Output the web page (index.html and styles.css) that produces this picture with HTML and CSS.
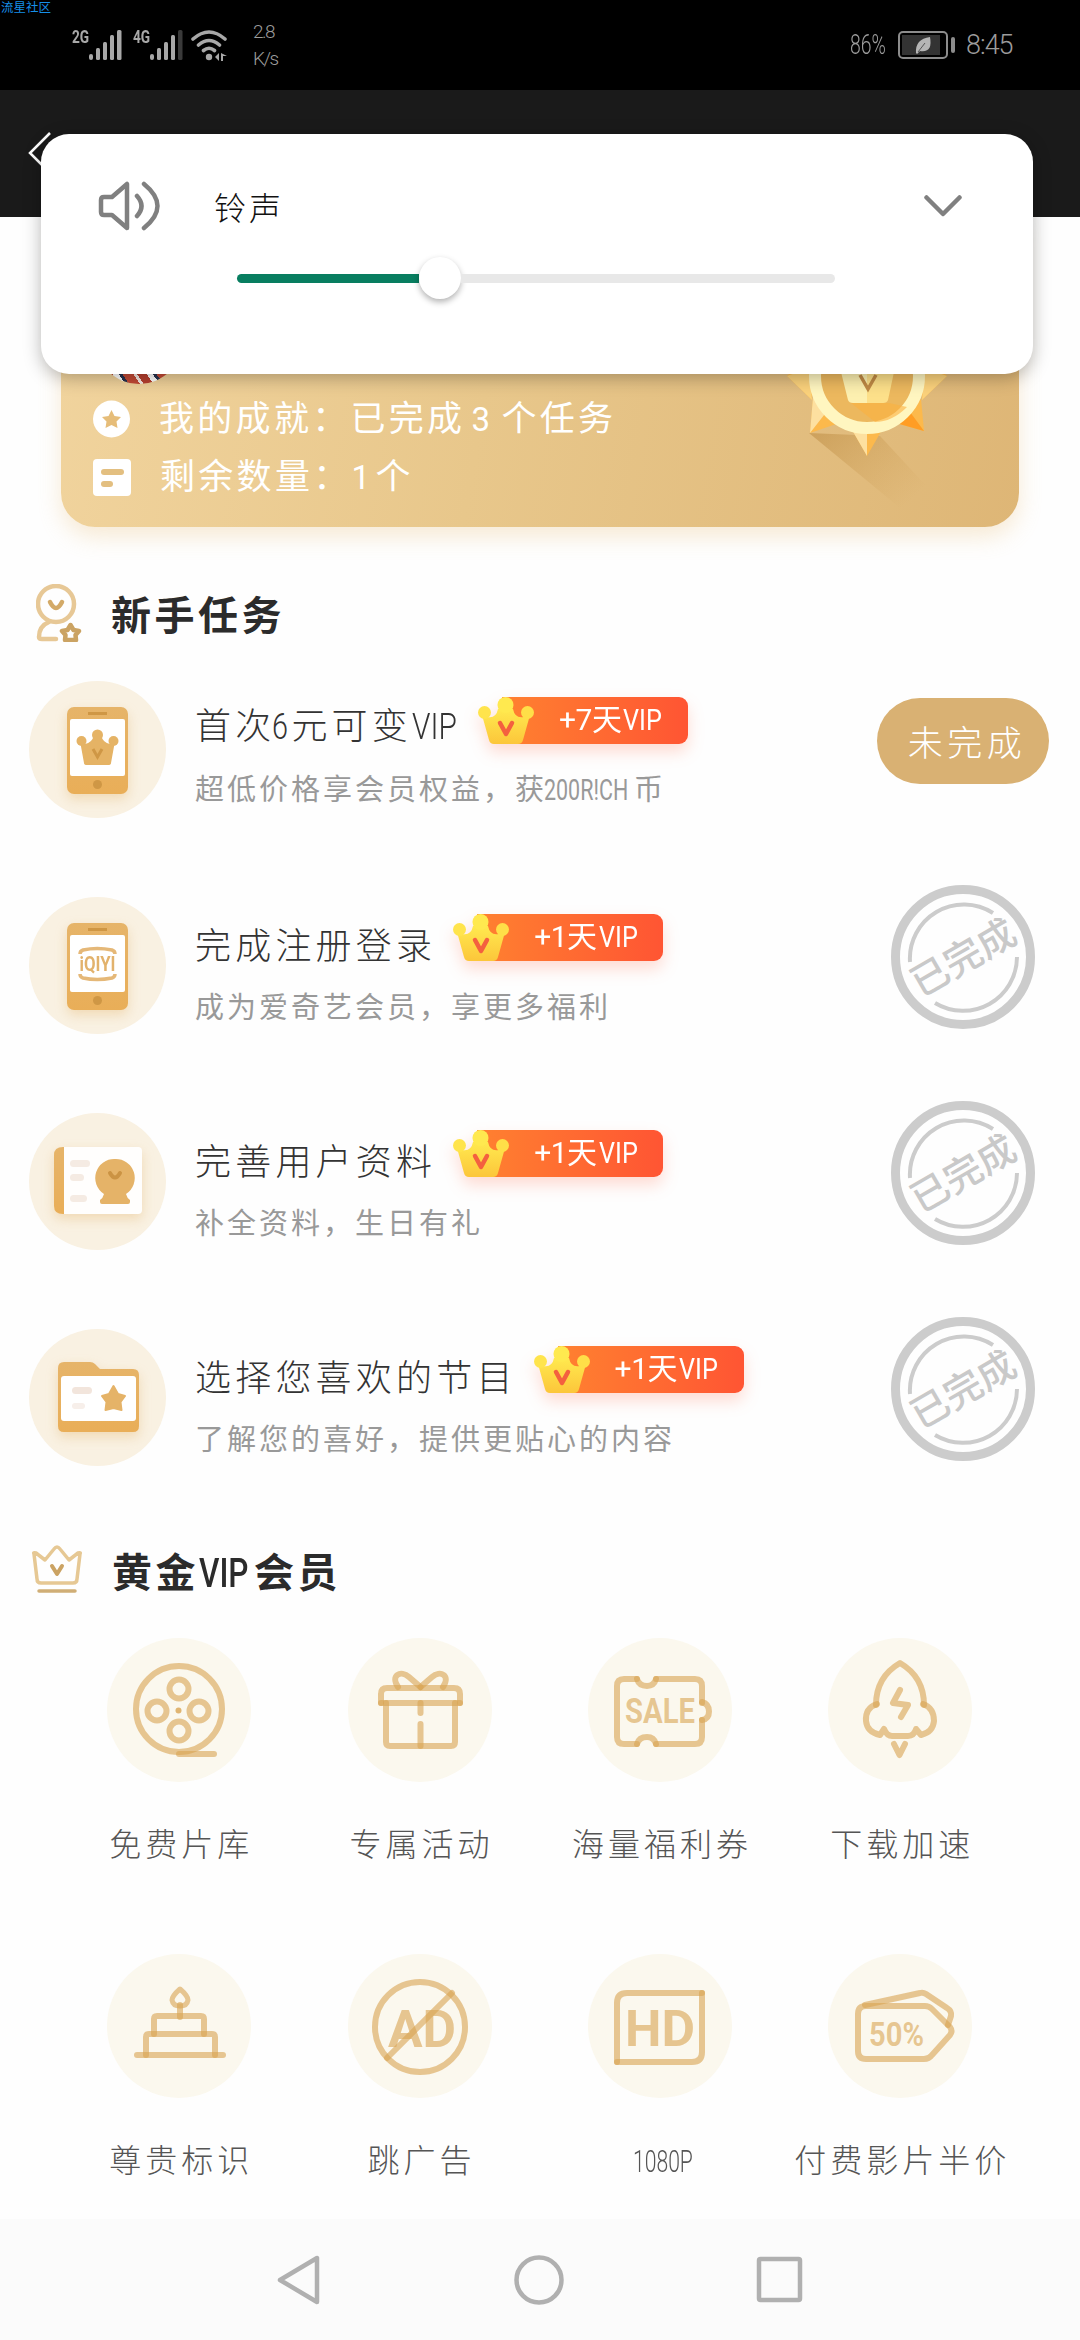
FILE: index.html
```html
<!DOCTYPE html>
<html lang="zh-CN">
<head>
<meta charset="utf-8">
<title>会员任务</title>
<link rel="stylesheet" href="styles.css">
</head>
<body>
<svg class="defs" width="0" height="0" aria-hidden="true">
  <defs>
    <linearGradient id="gold" x1="0" y1="0" x2="0" y2="1"><stop offset="0" stop-color="#ffe94f"/><stop offset="1" stop-color="#fcc63a"/></linearGradient>
    <linearGradient id="amber" x1="0" y1="0" x2="0" y2="1"><stop offset="0" stop-color="#e6b469"/><stop offset="1" stop-color="#e9ae58"/></linearGradient>
    <linearGradient id="cast" gradientUnits="userSpaceOnUse" x1="830" y1="420" x2="905" y2="505"><stop offset="0" stop-color="#b9873c" stop-opacity=".5"/><stop offset="1" stop-color="#c9974c" stop-opacity="0"/></linearGradient>
    <linearGradient id="shine" x1="0" y1="0" x2="1" y2="0"><stop offset=".5" stop-color="#fdf0b0"/><stop offset=".5" stop-color="#fde08a"/></linearGradient>
    <symbol id="crown" viewBox="0 0 56 47">
      <path d="M4 18L9 20Q18 22 20 12H35Q37 22 46 20L52 18L45 43Q44 47 40 47H16Q12 47 11 43Z" fill="url(#gold)"/>
      <circle cx="6.500" cy="15.500" r="6.500" fill="#ffe44c"/><circle cx="27.500" cy="8" r="8" fill="#ffe94f"/><circle cx="49.500" cy="15.500" r="6.500" fill="#ffdf48"/>
      <path d="M22 26L28 37L34 26" fill="none" stroke="#f4603f" stroke-width="4.500" stroke-linecap="round" stroke-linejoin="round"/>
    </symbol>
    <symbol id="stamp" viewBox="0 0 144 144">
      <g fill="none" stroke="#ccc"><circle cx="72" cy="72" r="67.500" stroke-width="9"/>
      <path d="M19 77A54 54 0 0 1 102 28M126 72A54 54 0 0 1 44 118" stroke-width="4"/></g>
      <text x="72" y="86" class="stamp-text" text-anchor="middle" transform="rotate(-30 72 72)">已完成</text>
    </symbol>
  </defs>
</svg>

<div class="screen">
  <span class="watermark">流星社区</span>
  <header class="status">
    <div class="status-left">
      <span class="net"><b>2G</b></span>
      <svg class="bars" width="33" height="30" viewBox="0 0 33 30" fill="#a8a8a8"><rect y="24" width="4" height="6" rx="2"/><rect x="7" y="18" width="4" height="12" rx="1.500"/><rect x="14" y="12" width="4" height="18" rx="1.500"/><rect x="21" y="5" width="4" height="25" rx="1.500"/><rect x="28" width="4.500" height="30" rx="1.500"/></svg>
      <span class="net second"><b>4G</b></span>
      <svg class="bars" width="33" height="30" viewBox="0 0 33 30" fill="#a8a8a8"><rect y="24" width="4" height="6" rx="2"/><rect x="7" y="18" width="4" height="12" rx="1.500"/><rect x="14" y="12" width="4" height="18" rx="1.500"/><rect x="21" y="5" width="4" height="25" rx="1.500"/><rect x="28" width="4.500" height="30" rx="1.500" fill="#3a3a3a"/></svg>
      <svg class="wifi" width="38" height="31" viewBox="0 0 38 31"><g fill="none" stroke="#a8a8a8" stroke-width="3.600" stroke-linecap="round"><path d="M2 9Q18-5 34 9M7.500 15Q18 6 28.500 15M12.500 20.500Q18 16 23.500 20.500"/></g><circle cx="18" cy="27" r="3.200" fill="#a8a8a8"/><path d="M24 27L28 23V31ZM30 23V31H32V26L36 26Z" fill="#a8a8a8"/></svg>
      <div class="speed"><span>2.8</span><span>K/s</span></div>
    </div>
    <div class="status-right">
      <span class="hand pct"><b>86%</b></span>
      <svg width="58" height="28" viewBox="0 0 58 28"><rect x="1" y="1" width="48" height="26" rx="4" fill="none" stroke="#8c8c8c" stroke-width="2"/><rect x="4" y="4" width="38" height="20" fill="#333"/><path d="M18 22Q17 8 32 6Q35 22 22 20L19 23Z" fill="#b5b5b5"/><path d="M20 21L27 12" stroke="#555" stroke-width="1"/><rect x="53" y="6" width="4" height="16" rx="2" fill="#8c8c8c"/></svg>
      <span class="hand clock">8:45</span>
    </div>
  </header>

  <div class="topbar">
    <svg width="24" height="42" viewBox="0 0 24 42" fill="none" stroke="#fff" stroke-width="2.500"><path d="M22 1L2 21L22 41"/></svg>
  </div>

  <section class="volume">
    <div class="volume-head">
      <svg width="62" height="50" viewBox="0 0 62 50" fill="none" stroke="#808080" stroke-width="4.500" stroke-linecap="round" stroke-linejoin="round"><path d="M3 19Q3 16 6 16H14L29 3V47L14 34H6Q3 34 3 31ZM39 15Q48 25 39 35M46 3Q73 25 46 47"/></svg>
      <span class="volume-name">铃声</span>
      <svg class="chev" width="38" height="23" viewBox="0 0 38 23" fill="none" stroke="#808080" stroke-width="4.500" stroke-linecap="round" stroke-linejoin="round"><path d="M2.500 2.500L19 19L35.500 2.500"/></svg>
    </div>
    <div class="slider"><div class="slider-fill"></div><div class="thumb"></div><div class="slider-rest"></div></div>
  </section>

  <section class="card">
    <svg class="medal" width="200" height="220" viewBox="767 300 200 220">
      <path d="M809 433L880 436L930 490L905 512Z" fill="url(#cast)"/>
      <path d="M867 456L848 423L886 423ZM810 433L813 399L845 421ZM924 431L921 399L889 421ZM787 376L813 350L812 400ZM947 376L921 350L922 400Z" fill="#fcb94c"/>
      <path d="M867 456V423H848ZM810 433L813 397L828 410Z" fill="#fde0a0"/><path d="M787 376L809 368L812 400ZM947 376L925 368L922 400Z" fill="#fbd27c"/>
      <path d="M924 431L889 421L910 412Z" fill="#ff9d24"/>
      <circle cx="867" cy="376" r="52" fill="#ecb85e" stroke="#fff6c0" stroke-width="12"/>
      <path d="M851 403H889L907 407Q892 422 875 422Z" fill="#fbb040" opacity=".6"/>
      <path d="M841 372H894L888 400Q887 403 883 403H853Q849 403 848 400Z" fill="url(#shine)"/>
      <path d="M860 375L868 389L876 375" fill="none" stroke="#c08a45" stroke-width="3.500"/>
    </svg>
    <div class="avatar"></div>
    <div class="stat">
      <svg width="37" height="38" viewBox="0 0 37 38"><circle cx="18.500" cy="19" r="18.500" fill="#fff"/><path d="M18.500 10L21.500 16L28 17L23.500 21.500L24.500 28L18.500 25L12.500 28L13.500 21.500L9 17L15.500 16Z" fill="#e6bd79"/></svg>
      <p>我的成就：已完成<i class="three">3</i>个任务</p>
    </div>
    <div class="stat">
      <svg width="38" height="37" viewBox="0 0 38 37"><rect width="38" height="37" rx="4" fill="#fff"/><rect x="8" y="10" width="23" height="6" rx="3" fill="#e3bf80"/><rect x="8" y="22" width="12" height="6" rx="3" fill="#e3bf80"/></svg>
      <p>剩余数量：<i class="one">1</i>个</p>
    </div>
  </section>

  <h2 class="head head-tasks">
    <svg width="46" height="58" viewBox="0 0 46 58" fill="none" stroke="#e7c896" stroke-width="4.500" stroke-linecap="round"><circle cx="20" cy="20" r="18"/><path d="M13 38Q3 42 3 53Q3 55 6 55H20"/><path d="M14 18Q20 30 26 18" stroke="#d3aa68"/><path d="M34.500 41L37.500 46L43 47L39.500 51L40 56H29L29.500 51L26 47L31.500 46Z" stroke="#cba363" stroke-linejoin="round"/></svg>
    <span>新手任务</span>
  </h2>

  <main class="tasks">
    <article class="task">
      <div class="disc"><svg width="137" height="137" viewBox="0 0 137 137"><rect x="38" y="26" width="61" height="87" rx="7" fill="url(#amber)"/><rect x="41" y="38" width="55" height="57" rx="2" fill="#fff"/><path d="M59 32.500H78" stroke="#cf9745" stroke-width="3"/><circle cx="68.500" cy="103.500" r="4.500" fill="#cf9745"/><path d="M51 60L56 63Q63 62 65 54H72Q74 62 81 63L86 60L82 82Q82 84 79 84H58Q55 84 55 82Z" fill="#e5b365"/><circle cx="52.500" cy="60" r="5" fill="#e5b365"/><circle cx="68.500" cy="54" r="5.500" fill="#e5b365"/><circle cx="84.500" cy="60" r="5" fill="#e5b365"/><path d="M64 68L68.500 76L73 68" fill="none" stroke="#cf9745" stroke-width="3"/></svg></div>
      <div class="info">
        <div class="line"><h3>首次<i class="six">6</i>元可变<i class="vip">VIP</i></h3><div class="badge"><svg width="56" height="47"><use href="#crown"/></svg><span>+7天<i>VIP</i></span></div></div>
        <p>超低价格享会员权益，获<i class="rich">200R!CH</i>币</p>
      </div>
      <button class="todo">未完成</button>
    </article>
    <article class="task">
      <div class="disc"><svg width="137" height="137" viewBox="0 0 137 137"><rect x="38" y="26" width="61" height="87" rx="7" fill="url(#amber)"/><rect x="41" y="38" width="55" height="57" rx="2" fill="#fff"/><path d="M59 32.500H78" stroke="#cf9745" stroke-width="3"/><circle cx="68.500" cy="103.500" r="4.500" fill="#cf9745"/><path d="M51 57Q51 54 54 53Q68 50 83 53Q86 54 86 57M51 77Q51 80 54 81Q68 84 83 81Q86 80 86 77" fill="none" stroke="#e5b878" stroke-width="3.500"/><text x="68.500" y="74" class="qiyi" text-anchor="middle" textLength="36" lengthAdjust="spacingAndGlyphs">iQIYI</text></svg></div>
      <div class="info">
        <div class="line"><h3>完成注册登录</h3><div class="badge"><svg width="56" height="47"><use href="#crown"/></svg><span>+1天<i>VIP</i></span></div></div>
        <p>成为爱奇艺会员，享更多福利</p>
      </div>
      <svg class="done" width="144" height="144"><use href="#stamp"/></svg>
    </article>
    <article class="task">
      <div class="disc"><svg width="137" height="137" viewBox="0 0 137 137"><path d="M34 34H37V101H34Q25 101 25 93V42Q25 34 34 34Z" fill="url(#amber)"/><path d="M35 34H109Q113 34 113 38V97Q113 101 109 101H35Z" fill="#fffefd"/><g fill="#f5ebe3"><rect x="41" y="47" width="20" height="7" rx="3.500"/><rect x="41" y="61" width="14" height="7" rx="3.500"/><rect x="41" y="82" width="17" height="7" rx="3.500"/></g><path d="M86 46A19 19 0 0 1 97 81Q98 85 101 87V89Q101 91 99 91H73Q71 91 71 89V87Q74 85 75 81A19 19 0 0 1 86 46Z" fill="#e5b368"/><path d="M81 60Q86 69 91 60" fill="none" stroke="#cb9343" stroke-width="4" stroke-linecap="round"/></svg></div>
      <div class="info">
        <div class="line"><h3>完善用户资料</h3><div class="badge"><svg width="56" height="47"><use href="#crown"/></svg><span>+1天<i>VIP</i></span></div></div>
        <p>补全资料，生日有礼</p>
      </div>
      <svg class="done" width="144" height="144"><use href="#stamp"/></svg>
    </article>
    <article class="task">
      <div class="disc"><svg width="137" height="137" viewBox="0 0 137 137"><path d="M35 33H61Q64 33 66 35L71 40H104Q110 40 110 46V97Q110 103 104 103H35Q29 103 29 97V39Q29 33 35 33Z" fill="url(#amber)"/><rect x="32" y="47" width="75" height="45" rx="3" fill="#fff"/><rect x="43" y="58" width="20" height="7" rx="3.500" fill="#f2e5dc"/><rect x="43" y="74" width="13" height="6" rx="3" fill="#f7efea"/><path d="M84.500 57L89 65L96 67L91.500 73L92.500 81L84.500 79L76.500 81L77.500 73L73 67L80 65Z" fill="#e5b368" stroke="#e5b368" stroke-width="2" stroke-linejoin="round"/></svg></div>
      <div class="info">
        <div class="line"><h3>选择您喜欢的节目</h3><div class="badge"><svg width="56" height="47"><use href="#crown"/></svg><span>+1天<i>VIP</i></span></div></div>
        <p>了解您的喜好，提供更贴心的内容</p>
      </div>
      <svg class="done" width="144" height="144"><use href="#stamp"/></svg>
    </article>
  </main>

  <h2 class="head head-vip">
    <svg width="50" height="49" viewBox="0 0 50 49" fill="none" stroke="#e6c894" stroke-width="3.500" stroke-linejoin="round" stroke-linecap="round"><path d="M2 9Q1 7 4 8L13 15L22 4Q25 0 28 4L37 15L46 8Q49 7 48 9L45 34Q45 38 41 38H9Q5 38 5 34Z"/><path d="M20 21L25 29L30 21" stroke="#cba363" stroke-width="4"/><path d="M7 46H43" stroke="#d0ae76"/></svg>
    <span>黄金<i class="vip">VIP</i>会员</span>
  </h2>

  <section class="perks">
    <div class="perk"><svg viewBox="0 0 144 144"><circle class="bg" cx="72" cy="72" r="72"/><circle cx="72" cy="71" r="43"/><circle cx="72" cy="51" r="9.500"/><circle cx="50" cy="73" r="9.500"/><circle cx="92" cy="73" r="9.500"/><circle cx="72" cy="93" r="9.500"/><circle class="dot" cx="71.500" cy="72.500" r="3"/><path d="M72 116H107"/></svg><span>免费片库</span></div>
    <div class="perk"><svg viewBox="0 0 144 144"><circle class="bg" cx="72" cy="72" r="72"/><path d="M33 65V56Q33 50 39 50H106Q112 50 112 56V65"/><path d="M33 65H112"/><path d="M38 65V104Q38 108 42 108H103Q107 108 107 104V65"/><path d="M72.500 65V75M72.500 86V108"/><path d="M50 49C42 37 53 32 61 39L72.500 49"/><path d="M95 49C103 37 92 32 84 39L72.500 49"/></svg><span>专属活动</span></div>
    <div class="perk"><svg viewBox="0 0 144 144"><circle class="bg" cx="72" cy="72" r="72"/><path d="M49 41H36Q29 41 29 48V99Q29 106 36 106H49M68 106H107Q114 106 114 99V82M114 65V48Q114 41 107 41H68"/><path d="M49 41Q51 48 59 48Q66 48 68 41M49 106Q51 99 59 99Q66 99 68 106M114 64Q121 66 121 73.500Q121 81 114 82"/><text x="37" y="85" font-size="35" textLength="70" lengthAdjust="spacingAndGlyphs">SALE</text></svg><span>海量福利券</span></div>
    <div class="perk"><svg viewBox="0 0 144 144"><circle class="bg" cx="72" cy="72" r="72"/><path d="M48 67Q48 39 72 25Q96 39 96 67"/><path d="M49 66Q37 70 38 83Q39 94 52 97L56 91Q59 98 64 98H80Q86 98 88 91L93 97Q105 94 106 83Q106 70 95 66"/><path d="M72 52L65 65L80 67L73 79"/><path d="M66 106L71.500 117L77 106"/></svg><span>下载加速</span></div>
    <div class="perk"><svg viewBox="0 0 144 144"><circle class="bg" cx="72" cy="72" r="72"/><path d="M30 101H116"/><path d="M39 101V83Q39 80 42 80H105Q108 80 108 83V101"/><path d="M47 80V65Q47 62 50 62H94Q97 62 97 65V80"/><path d="M73 51V63"/><path d="M73 35Q65 42 65 46Q66 52 73 52Q80 52 81 46Q81 42 73 35Z" stroke-width="5"/></svg><span>尊贵标识</span></div>
    <div class="perk"><svg viewBox="0 0 144 144"><circle class="bg" cx="72" cy="72" r="72"/><circle cx="72" cy="73" r="45"/><path d="M104 39L39 104"/><text x="40" y="93" font-size="52" textLength="68" lengthAdjust="spacingAndGlyphs">AD</text></svg><span>跳广告</span></div>
    <div class="perk"><svg viewBox="0 0 144 144"><circle class="bg" cx="72" cy="72" r="72"/><path d="M114 39H39Q29 39 29 49V108"/><path d="M29 108H104Q114 108 114 98V39"/><text x="37" y="92" font-size="50" textLength="70" lengthAdjust="spacingAndGlyphs">HD</text></svg><span><i class="p1080">1080P</i></span></div>
    <div class="perk"><svg viewBox="0 0 144 144"><circle class="bg" cx="72" cy="72" r="72"/><path d="M38 52H97Q101 52 104 55L122 73Q125 77 122 81L104 101Q101 105 96 105H38Q30 105 30 97V60Q30 52 38 52Z"/><path d="M37 51L92 39Q95 38 98 40L119 54Q124 57 123 62L120 71"/><text x="41" y="92" font-size="33" textLength="55" lengthAdjust="spacingAndGlyphs">50%</text></svg><span>付费影片半价</span></div>
  </section>

  <nav class="nav">
    <svg width="46" height="52" viewBox="0 0 46 52"><path d="M41 4V48L4 26Z"/></svg>
    <svg width="52" height="52" viewBox="0 0 52 52"><circle cx="26" cy="26" r="22.500"/></svg>
    <svg width="48" height="52" viewBox="0 0 48 52"><rect x="3" y="5" width="41" height="41" rx="1.500"/></svg>
  </nav>
</div>
</body>
</html>
```
FILE: styles.css
```css
* { box-sizing: border-box; margin: 0; padding: 0; }
body { background: #fff; font-family: "Noto Sans CJK SC", sans-serif; font-weight: 300; }
/* condensed latin runs: a fixed advance with the glyphs squeezed into it */
i { display: inline-block; font-style: normal; font-family: Roboto, "Liberation Sans", sans-serif; letter-spacing: 0; transform-origin: 0 50%; white-space: nowrap; }
svg { flex: none; display: block; }
.defs { position: absolute; }
.screen { position: relative; width: 1080px; height: 2340px; overflow: hidden; display: flex; flex-direction: column; background: #fefefe; }

.watermark { position: absolute; left: 1px; top: 0; font-size: 12.5px; line-height: 14px; font-weight: 400; color: #168fe8; }

/* status bar */
.status { flex: none; height: 90px; background: #000; color: #9c9c9c; display: flex; justify-content: space-between; align-items: center; padding: 0 66px 0 72px; font-family: Roboto, sans-serif; }
.status b { display: inline-block; font-weight: inherit; transform-origin: 0 50%; }
.status-left, .status-right { display: flex; align-items: center; }
.net { width: 17px; font: 700 18px/18px Roboto, sans-serif; transform: translateY(-8px); color: #a8a8a8; }
.net b { transform: scaleX(.76); }
.net.second { margin-left: 11px; }
.wifi { margin-left: 8px; }
.speed { margin-left: 24px; display: flex; flex-direction: column; font-size: 19px; line-height: 27px; font-weight: 300; letter-spacing: -1.5px; }
.hand { font-size: 27px; }
.pct { width: 48px; }
.pct b { transform: scaleX(.72); }
.clock { width: 48px; margin-left: 10px; letter-spacing: -1px; }

.topbar { flex: none; height: 127px; background: #1a1a1a; padding: 42px 0 0 28px; }

/* volume overlay */
.volume { position: absolute; left: 41px; top: 134px; width: 992px; height: 240px; border-radius: 28px; background: #fff; box-shadow: 0 4px 18px rgba(0,0,0,.28); z-index: 2; }
.volume-head { display: flex; align-items: center; padding: 47px 71px 0 57px; height: 97px; }
.volume-name { margin-left: 54px; font-size: 32px; letter-spacing: 3px; line-height: 50px; color: #111; }
.chev { margin-left: auto; }
.slider { display: flex; align-items: center; margin: 26px 198px 0 196px; height: 42px; }
.slider-fill { width: 182px; height: 9px; border-radius: 5px 0 0 5px; background: #087e60; }
.thumb { width: 42px; height: 42px; border-radius: 50%; background: #fff; box-shadow: 0 3px 6px rgba(0,0,0,.3); }
.slider-rest { flex: 1; height: 9px; border-radius: 0 5px 5px 0; background: #e8e8e8; }

/* gold card */
.card { position: relative; flex: none; height: 310px; margin: 0 61px; padding: 173px 0 0 32px; border-radius: 0 0 34px 34px; background: linear-gradient(100deg, #f1d49e 0%, #e8c78b 45%, #deb676 100%); box-shadow: 0 10px 22px rgba(232,190,120,.3); color: #fff; }
.medal { position: absolute; left: 706px; top: 83px; }
.avatar { position: absolute; left: 34px; top: 79px; width: 88px; height: 88px; border-radius: 50%; background: repeating-linear-gradient(55deg, #c34a35 0 9px, #f6e9e2 9px 12px, #b8402f 12px 20px, #fff 20px 25px, #27324e 25px 28px); }
.stat { display: flex; align-items: center; height: 58px; }
.stat p { margin: -3px 0 0 29px; font-size: 35px; letter-spacing: 3.300px; line-height: 50px; font-weight: 400; white-space: nowrap; }
.stat .three { width: 36px; padding-left: 6px; font-size: 33px; }
.stat .one { width: 24px; font-size: 33px; }

/* section headings */
.head { flex: none; display: flex; align-items: center; font-size: 40px; line-height: 48px; letter-spacing: 3.500px; font-weight: 700; color: #2b2b2b; }
.head-tasks { height: 57px; margin-top: 57px; padding-left: 36px; }
.head-tasks span { margin-left: 29px; }
.head-vip { height: 49px; margin-top: 40px; padding-left: 32px; }
.head-vip span { margin: 4px 0 0 30px; }
.head-vip .vip { width: 55px; transform: scaleX(.79); font-weight: 500; }

/* tasks */
.tasks { flex: none; }
.task { height: 216px; display: flex; align-items: center; padding: 0 31px 0 29px; }
.disc { flex: none; width: 137px; height: 137px; border-radius: 50%; background: #f9f1e2; }
.disc svg { filter: drop-shadow(0 5px 6px rgba(226,176,96,.35)); }
.info { flex: 1; margin: 7px 0 0 29px; }
.line { display: flex; align-items: center; height: 50px; }
.line h3 { padding-top: 10px; font-size: 36px; letter-spacing: 4.200px; font-weight: 300; line-height: 46px; color: #333; white-space: nowrap; }
.line h3 .six { width: 16px; transform: translateX(-3px) scaleX(.8); }
.line h3 .vip { width: 49px; transform: scaleX(.83); }
.badge { flex: none; display: flex; width: 210px; height: 47px; margin-left: 17px; border-radius: 18px 9px 9px 18px; background: linear-gradient(90deg, transparent 0 24px, #ff8130 24px, #ff5533 100%); filter: drop-shadow(0 8px 8px rgba(255,95,60,.22)); color: #fff; }
.badge span { margin-left: 25px; font: 400 30px/46px Roboto, "Noto Sans CJK SC", sans-serif; letter-spacing: -.5px; white-space: nowrap; }
.badge i { width: 42px; margin-left: 2px; transform: scaleX(.84); }
.info p { margin-top: 22px; font-size: 29px; letter-spacing: 3px; line-height: 40px; color: #999; white-space: nowrap; font-weight: 400; }
.rich { width: 87px; transform: translateX(-3px) scaleX(.74); }
.todo { width: 172px; height: 86px; margin-top: -16px; border: 0; border-radius: 43px; background: #d9b173; color: #fff; font: 300 35px/84px "Noto Sans CJK SC", sans-serif; letter-spacing: 4.500px; padding-left: 8px; }
.done { margin: 0 14px 0 0; transform: translateY(-8px); }
.stamp-text { font: 500 38px "Noto Sans CJK SC", sans-serif; fill: #c9c9c9; }
.qiyi { font: 700 20px Roboto, sans-serif; fill: #e2b26c; }

/* benefits */
.perks { flex: none; display: grid; grid-template-columns: repeat(4, 240.400px); grid-template-rows: 316px 260px; margin: 44px 0 0 59px; }
.perk { display: flex; flex-direction: column; align-items: center; }
.perk svg { width: 144px; height: 144px; fill: none; stroke: #d9a452; stroke-opacity: .6; stroke-width: 6; stroke-linecap: round; stroke-linejoin: round; }
.perk .bg { fill: #fbf8ee; stroke: none; }
.perk .dot { fill: #d9a452; fill-opacity: .8; stroke: none; }
.perk text { font-family: Roboto, "Liberation Sans", sans-serif; font-weight: 700; fill: #d9a452; fill-opacity: .6; stroke: none; }
.perk span { margin-top: 38px; font-size: 32px; letter-spacing: 4px; margin-right: -4px; line-height: 44px; color: #555; white-space: nowrap; }
.perk .p1080 { width: 58px; transform: scaleX(.66); }

.nav { flex: none; margin-top: auto; height: 121px; background: #fbfbfb; display: flex; justify-content: space-between; align-items: center; padding: 0 276px; }
.nav svg { fill: none; stroke: #b0b0b0; stroke-width: 4.500; stroke-linejoin: round; }
```
